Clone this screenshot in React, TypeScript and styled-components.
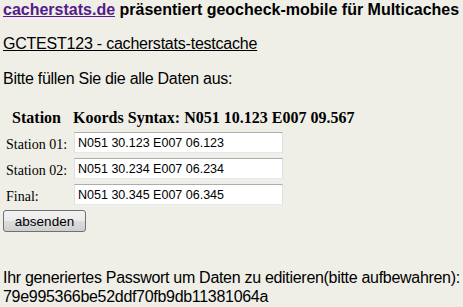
import React from "react";
import styled, { createGlobalStyle } from "styled-components";

const Global = createGlobalStyle`
  html, body { margin: 0; padding: 0; background: #efefe7; }
  body { font-family: "Liberation Sans", Arial, sans-serif; color: #000; }
`;

const Page = styled.div`
  padding: 1px 2px 0 2px;
  font-size: 16px;
`;

const Title = styled.div`
  font-weight: bold;
  margin: 0 0 0 1px;
  white-space: nowrap;
`;

const SiteLink = styled.a`
  color: #551a8b;
  text-decoration: underline;
`;

const CacheLink = styled.a`
  display: inline-block;
  color: #000;
  text-decoration: underline;
  letter-spacing: -0.22px;
  margin: 16px 0 0 1px;
`;

const Line = styled.div<{ $top: number }>`
  margin: ${(p) => p.$top}px 0 0 1px;
  letter-spacing: -0.28px;
  white-space: nowrap;
`;

const Table = styled.table`
  border-spacing: 2px;
  margin-top: 18px;
  font-family: "Liberation Serif", "Times New Roman", serif;
`;

const Th = styled.th<{ $align?: string }>`
  font-size: 16px;
  font-weight: bold;
  padding: 1px 2px 2px 2px;
  text-align: ${(p) => p.$align || "center"};
  white-space: nowrap;
`;

const Label = styled.td`
  font-size: 14px;
  padding: 4px 2px 1px 2px;
  vertical-align: middle;
  white-space: nowrap;
`;

const Cell = styled.td`
  padding: 1px 2px;
`;

const Input = styled.input`
  display: block;
  box-sizing: border-box;
  width: 209px;
  height: 21px;
  margin: 0 0 1px 1px;
  padding: 1px 3px;
  font-family: "Liberation Sans", Arial, sans-serif;
  font-size: 12.5px;
  color: #000;
  background: #fff;
  border: 1px solid #dbdfe6;
  border-top-color: #abadb3;
  border-bottom-color: #e3e9ef;
  outline: none;
`;

const Button = styled.button`
  display: block;
  box-sizing: border-box;
  width: 83px;
  height: 22px;
  margin: 1px 0 0 1px;
  padding: 0;
  font-family: "Liberation Sans", Arial, sans-serif;
  font-size: 13.5px;
  color: #000;
  border: 1px solid #707070;
  border-radius: 3px;
  background: linear-gradient(#f2f2f2 0%, #ebebeb 50%, #dddddd 50%, #cfcfcf 100%);
`;

const Info = styled.div`
  margin: 36px 0 0 1px;
  line-height: 19px;
  letter-spacing: -0.3px;
  white-space: nowrap;
`;

const rows = [
  { label: "Station 01:", value: "N051 30.123 E007 06.123" },
  { label: "Station 02:", value: "N051 30.234 E007 06.234" },
  { label: "Final:", value: "N051 30.345 E007 06.345" },
];

export default function App() {
  return (
    <>
      <Global />
      <Page>
        <Title>
          <SiteLink href="#">cacherstats.de</SiteLink> präsentiert geocheck-mobile für Multicaches
        </Title>
        <CacheLink href="#">GCTEST123 - cacherstats-testcache</CacheLink>
        <Line $top={17}>Bitte füllen Sie die alle Daten aus:</Line>
        <Table>
          <tbody>
            <tr>
              <Th>Station</Th>
              <Th $align="left">Koords Syntax: N051 10.123 E007 09.567</Th>
            </tr>
            {rows.map((r) => (
              <tr key={r.label}>
                <Label>{r.label}</Label>
                <Cell>
                  <Input defaultValue={r.value} />
                </Cell>
              </tr>
            ))}
          </tbody>
        </Table>
        <Button>absenden</Button>
        <Info>
          Ihr generiertes Passwort um Daten zu editieren(bitte aufbewahren):
          <br />
          79e995366be52ddf70fb9db11381064a
        </Info>
      </Page>
    </>
  );
}
